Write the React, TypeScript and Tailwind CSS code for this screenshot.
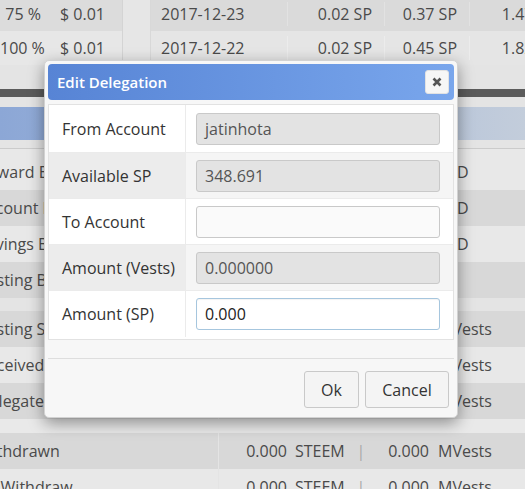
import React from 'react'

type BgRow = { label: string; unit?: string; dark: boolean }

const sectionA: BgRow[] = [
  { label: 'Reward Balance', unit: 'SBD', dark: false },
  { label: 'Account Balance', unit: 'SBD', dark: true },
  { label: 'Savings Balance', unit: 'SBD', dark: false },
  { label: 'Vesting Balance', dark: true },
]

const sectionB: BgRow[] = [
  { label: 'Vesting Shares', unit: 'MVests', dark: true },
  { label: 'Received Vesting Shares', unit: 'MVests', dark: false },
  { label: 'Delegated Vesting Shares', unit: 'MVests', dark: true },
]

const sectionC: BgRow[] = [
  { label: 'Withdrawn', unit: 'MVests', dark: true },
  { label: 'To Withdraw', unit: 'MVests', dark: false },
]

function BalanceRow({ row, tall }: { row: BgRow; tall?: boolean }) {
  return (
    <div
      className={`flex items-center ${tall ? 'h-[41px] pt-[5px]' : 'h-[36px]'} ${
        row.dark ? 'bg-[#d8d8d8]' : 'bg-[#e8e8e8]'
      }`}
    >
      <div className="flex h-full w-[218px] shrink-0 items-center overflow-hidden">
        <span className="-ml-[22px] whitespace-nowrap">{row.label}</span>
      </div>
      <div className="flex h-full flex-1 items-center whitespace-nowrap border-l border-[#e4e4e4]">
        <span className="w-[68px] text-right">0.000</span>
        <span className="ml-[8px] w-[58px]">STEEM</span>
        <span className="w-[16px] text-center text-[#a8a8a8]">|</span>
        <span className="w-[60px] text-right">{row.unit ? '0.000' : ''}</span>
        <span className="ml-[9px]">{row.unit ?? ''}</span>
      </div>
    </div>
  )
}

function FieldRow({
  label,
  value,
  even,
  kind,
  h,
}: {
  label: string
  value: string
  even: boolean
  kind: 'readonly' | 'empty' | 'focus'
  h: string
}) {
  const input =
    kind === 'readonly'
      ? 'bg-[#e3e3e3] border-[#c9c9c9] text-[#555]'
      : kind === 'empty'
        ? 'bg-[#fafafa] border-[#c9c9c9] text-[#555]'
        : 'bg-white border-[#a6c6de] text-[#222] shadow-[inset_0_1px_1px_rgba(0,0,0,0.05)]'
  return (
    <div className={`flex ${h} border-b border-[#ebebeb] last:border-b-0`}>
      <div
        className={`flex w-[137px] shrink-0 items-center border-r border-[#ebebeb] pl-[13px] text-[#333] ${
          even ? 'bg-[#ececec]' : 'bg-white'
        }`}
      >
        {label}
      </div>
      <div className={`flex flex-1 items-center pl-[10px] pr-[13px] ${even ? 'bg-[#f5f5f5]' : 'bg-white'}`}>
        <div className={`flex h-[32px] w-full items-center rounded-[3px] border pl-[8px] ${input}`}>{value}</div>
      </div>
    </div>
  )
}

export default function App() {
  return (
    <div className="relative h-[489px] w-[525px] overflow-hidden bg-[#e4e4e4] font-['Open_Sans',sans-serif] text-[16px] text-[#4a4a4a]">
      {/* top tables */}
      <div className="flex h-[65px] whitespace-nowrap">
        <div className="w-[123px] shrink-0 border-r border-[#d4d4d4]">
          <div className="flex h-[31px] items-center bg-[#dcdcdc] pb-[3px]">
            <span className="w-[52px] pr-[11px] text-right">75 %</span>
            <span className="pl-[8px]">$ 0.01</span>
          </div>
          <div className="flex h-[34px] items-center bg-[#e7e7e7]">
            <span className="w-[52px] pr-[11px] text-right">100 %</span>
            <span className="pl-[8px]">$ 0.01</span>
          </div>
        </div>
        <div className="w-[28px] shrink-0 border-r border-[#d8d8d8] bg-[#e6e6e6]" />
        <div className="flex-1">
          <div className="flex h-[31px] items-center bg-[#dadada] pb-[3px]">
            <span className="w-[136px] shrink-0 pl-[10px]">2017-12-23</span>
            <span className="w-[97px] shrink-0 border-l border-[#e2e2e2] pr-[12px] text-right">0.02 SP</span>
            <span className="w-[85px] shrink-0 border-l border-[#e2e2e2] pr-[12px] text-right">0.37 SP</span>
            <span className="w-[99px] shrink-0 border-l border-[#e2e2e2] pr-[12px] text-right">1.47 SP</span>
          </div>
          <div className="flex h-[34px] items-center bg-[#e5e5e5]">
            <span className="w-[136px] shrink-0 pl-[10px]">2017-12-22</span>
            <span className="w-[97px] shrink-0 border-l border-[#ececec] pr-[12px] text-right">0.02 SP</span>
            <span className="w-[85px] shrink-0 border-l border-[#ececec] pr-[12px] text-right">0.45 SP</span>
            <span className="w-[99px] shrink-0 border-l border-[#ececec] pr-[12px] text-right">1.82 SP</span>
          </div>
        </div>
      </div>

      <div className="h-[24px]" />
      <div className="h-[8px] bg-[#5b5b5b]" />
      <div className="h-[10px]" />
      <div className="h-[33px] bg-gradient-to-r from-[#8ca7d6] to-[#c3cddb]" />
      <div className="h-[9px] border-b border-[#cbcbcb]" />

      {sectionA.map((r, i) => (
        <BalanceRow key={r.label} row={r} tall={i === 0} />
      ))}
      <div className="h-[13px]" />
      {sectionB.map((r) => (
        <BalanceRow key={r.label} row={r} />
      ))}
      <div className="h-[14px] bg-[#e9e9e9]" />
      {sectionC.map((r) => (
        <BalanceRow key={r.label} row={r} />
      ))}

      {/* dialog */}
      <div className="absolute left-[44px] top-[60px] flex h-[358px] w-[414px] flex-col rounded-[5px] border border-[#d2d2d2] bg-[#f7f7f7] p-[3px] shadow-[0_5px_16px_rgba(0,0,0,0.4)]">
        <div className="flex h-[36px] shrink-0 items-center justify-between rounded-[4px] bg-gradient-to-r from-[#5784d5] to-[#79a6ec] pl-[9px] pr-[5px]">
          <span className="text-[15px] font-semibold text-white">Edit Delegation</span>
          <button className="flex h-[24px] w-[24px] items-center justify-center rounded-[3px] border border-[#e2e2e2] bg-[#f6f6f6]">
            <svg width="10" height="10" viewBox="0 0 10 10">
              <path d="M1.5 1.5 L8.5 8.5 M8.5 1.5 L1.5 8.5" stroke="#555" strokeWidth="2.6" />
            </svg>
          </button>
        </div>

        <div className="mt-[4px] border border-[#e2e2e2] bg-white">
          <FieldRow label="From Account" value="jatinhota" even={false} kind="readonly" h="h-[48px]" />
          <FieldRow label="Available SP" value="348.691" even kind="readonly" h="h-[46px]" />
          <FieldRow label="To Account" value="" even={false} kind="empty" h="h-[46px]" />
          <FieldRow label="Amount (Vests)" value="0.000000" even kind="readonly" h="h-[46px]" />
          <FieldRow label="Amount (SP)" value="0.000" even={false} kind="focus" h="h-[48px] pb-[2px]" />
        </div>

        <div className="mt-[18px] flex flex-1 items-start justify-end gap-[6px] border-t border-[#dedede] pr-[5px] pt-[12px]">
          <button className="h-[37px] w-[55px] rounded-[3px] border border-[#c9c9c9] bg-[#f4f4f4] text-[#333]">Ok</button>
          <button className="h-[37px] w-[84px] rounded-[3px] border border-[#c9c9c9] bg-[#f4f4f4] text-[#333]">Cancel</button>
        </div>
      </div>
    </div>
  )
}
